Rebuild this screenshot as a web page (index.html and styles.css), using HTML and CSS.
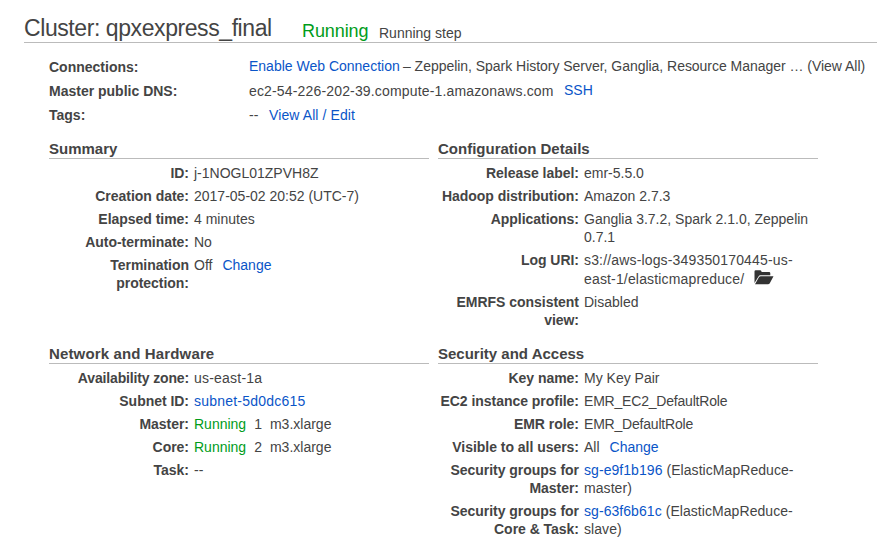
FILE: index.html
```html
<!DOCTYPE html>
<html lang="en">
<head>
<meta charset="utf-8">
<title>Cluster: qpxexpress_final</title>
<link rel="stylesheet" href="styles.css">
</head>
<body>
<main class="page">
  <header class="cluster-header">
    <h1>Cluster: qpxexpress_final</h1>
    <span class="state">Running</span>
    <span class="step">Running step</span>
  </header>

  <dl class="overview">
    <dt>Connections:</dt>
    <dd><a class="web" href="#">Enable Web Connection</a><span class="services">– Zeppelin, Spark History Server, Ganglia, Resource Manager … (View All)</span></dd>
    <dt>Master public DNS:</dt>
    <dd><span class="dns">ec2-54-226-202-39.compute-1.amazonaws.com</span><a class="ssh" href="#">SSH</a></dd>
    <dt>Tags:</dt>
    <dd><span class="dash">--</span><a class="edit" href="#">View All / Edit</a></dd>
  </dl>

  <div class="panels">
    <section class="panel">
      <h2>Summary</h2>
      <dl>
        <dt>ID:</dt><dd>j-1NOGL01ZPVH8Z</dd>
        <dt>Creation date:</dt><dd>2017-05-02 20:52 (UTC-7)</dd>
        <dt>Elapsed time:</dt><dd>4 minutes</dd>
        <dt>Auto-terminate:</dt><dd>No</dd>
        <dt>Termination<br>protection:</dt><dd>Off<a class="action" href="#">Change</a></dd>
      </dl>
    </section>

    <section class="panel wide-label">
      <h2>Configuration Details</h2>
      <dl>
        <dt>Release label:</dt><dd>emr-5.5.0</dd>
        <dt>Hadoop distribution:</dt><dd>Amazon 2.7.3</dd>
        <dt>Applications:</dt><dd>Ganglia 3.7.2, Spark 2.1.0, Zeppelin<br>0.7.1</dd>
        <dt>Log URI:</dt>
        <dd class="log"><span class="uri">s3://aws-logs-349350170445-us-<br>east-1/elasticmapreduce/</span><svg class="folder" viewBox="0 0 20 15" width="20" height="15" aria-hidden="true"><path d="M.5 13V1.500Q.5.300 1.700.300h4.600q1 0 1.400 1.700h7.400q1.200 0 1.200 1.200v2.100H6.400q-1.300 0-1.900 1.100z"/><path d="M1 14.300 4.900 7.300Q5.500 6.200 6.800 6.200h12.700l-3.700 7q-.6 1.100-1.900 1.100z"/></svg></dd>
        <dt>EMRFS consistent<br>view:</dt><dd>Disabled</dd>
      </dl>
    </section>

    <section class="panel">
      <h2 class="network">Network and Hardware</h2>
      <dl>
        <dt class="zone">Availability zone:</dt><dd class="subnet">us-east-1a</dd>
        <dt>Subnet ID:</dt><dd class="subnet"><a href="#">subnet-5d0dc615</a></dd>
        <dt>Master:</dt><dd class="nodes"><span class="ok">Running</span><span>1</span><span>m3.xlarge</span></dd>
        <dt>Core:</dt><dd class="nodes"><span class="ok">Running</span><span>2</span><span>m3.xlarge</span></dd>
        <dt>Task:</dt><dd>--</dd>
      </dl>
    </section>

    <section class="panel wide-label">
      <h2>Security and Access</h2>
      <dl>
        <dt>Key name:</dt><dd>My Key Pair</dd>
        <dt>EC2 instance profile:</dt><dd class="role">EMR_EC2_DefaultRole</dd>
        <dt>EMR role:</dt><dd class="role">EMR_DefaultRole</dd>
        <dt>Visible to all users:</dt><dd>All<a class="action" href="#">Change</a></dd>
        <dt>Security groups for<br>Master:</dt><dd class="group"><a href="#">sg-e9f1b196</a> (ElasticMapReduce-<br>master)</dd>
        <dt>Security groups for<br>Core &amp; Task:</dt><dd class="group"><a href="#">sg-63f6b61c</a> (ElasticMapReduce-<br>slave)</dd>
      </dl>
    </section>
  </div>
</main>
</body>
</html>
```
FILE: styles.css
```css
* { box-sizing: border-box; }
body {
  margin: 0;
  background: #fff;
  color: #444;
  font: 14px/18px "Liberation Sans", Arial, sans-serif;
  white-space: nowrap;
  overflow: hidden;
}
h1, h2, dl, dd { margin: 0; }
a { color: #0a55c8; text-decoration: none; }
dt { font-weight: bold; }

.page { padding: 12px 0 0 24px; }
.cluster-header {
  display: flex;
  height: 31px;
  border-bottom: 1px solid #bbb;
}
h1 {
  width: 278px;
  font-size: 23px;
  line-height: 32px;
  font-weight: normal;
  letter-spacing: -0.42px;
}
.state { width: 77px; font-size: 18px; line-height: 38px; color: #009c1a; letter-spacing: -0.1px; }
.step { line-height: 42px; }
.ok { color: #009c1a; }

.overview {
  display: grid;
  grid-template-columns: 200px 1fr;
  grid-auto-rows: 24px;
  margin: 15px 0 0 25px;
}
.overview dd { display: flex; }
.web { width: 154px; }
.services { letter-spacing: -0.03px; }
.dns { width: 315px; letter-spacing: 0.16px; }
.dash { width: 20px; }
.edit { letter-spacing: 0.1px; }
.web, .services, .ssh { margin-top: -1px; }

.panels {
  display: grid;
  grid-template-columns: 380px 380px;
  grid-template-rows: 205px auto;
  column-gap: 9px;
  margin: 10px 0 0 25px;
}
h2 {
  height: 19px;
  font-size: 15px;
  line-height: 18px;
  border-bottom: 1px solid #bbb;
}
.network { letter-spacing: 0.14px; }
.panel dl {
  display: grid;
  grid-template-columns: 140px 1fr;
  gap: 5px;
  padding-top: 5px;
}
.wide-label dl { grid-template-columns: 141px 1fr; }
.panel dt { text-align: right; letter-spacing: -0.03px; }
.panel .zone { letter-spacing: -0.15px; }
.action { margin-left: 10px; }
.subnet { letter-spacing: 0.22px; }
.role { letter-spacing: -0.2px; }
.group { letter-spacing: 0.06px; }
.nodes { display: flex; gap: 8px; }
.log { height: 37px; line-height: 18.5px; }
.uri { letter-spacing: 0.16px; }
.folder { margin: -2px 0 -2px 10px; vertical-align: 1px; fill: #333; }
```
